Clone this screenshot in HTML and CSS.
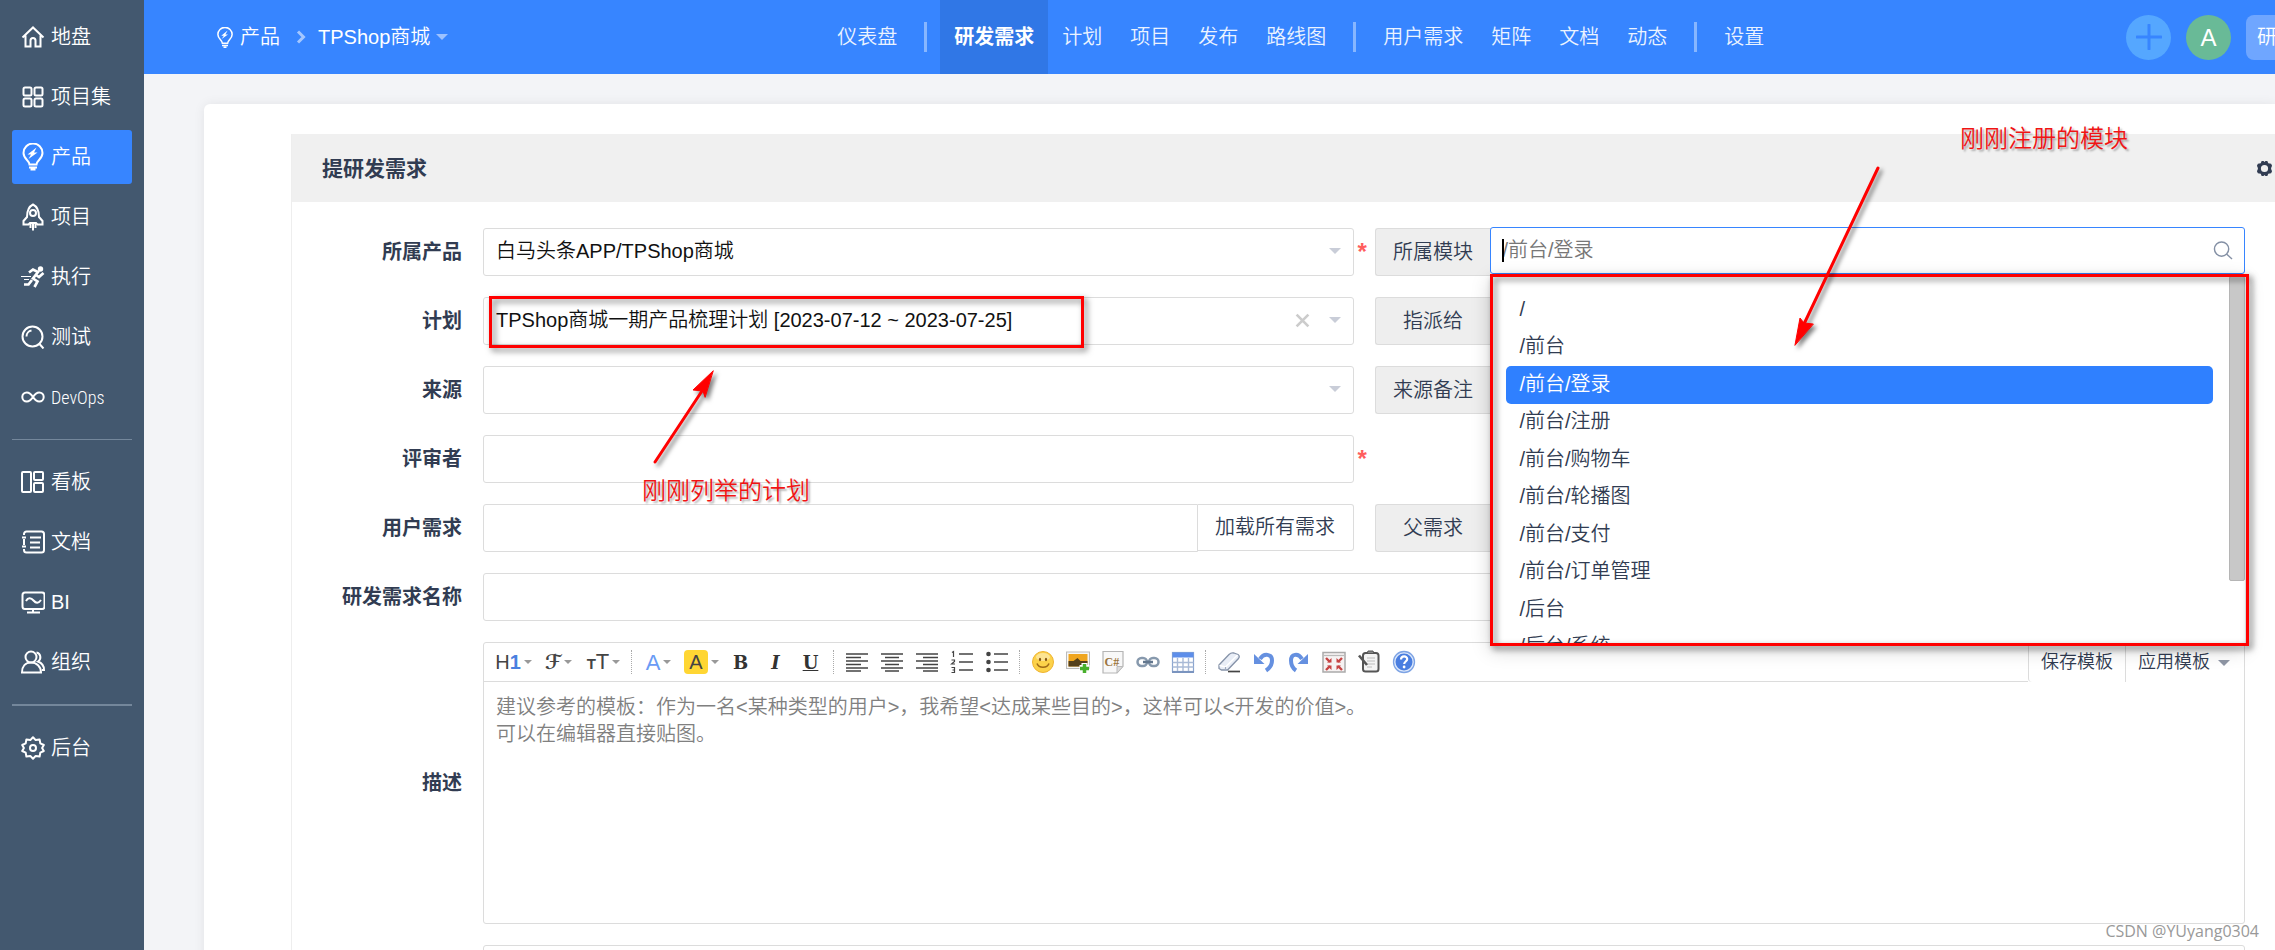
FILE: index.html
```html
<!DOCTYPE html>
<html lang="zh-CN">
<head>
<meta charset="utf-8">
<title>提研发需求</title>
<link rel="stylesheet" href="styles.css">
</head>
<body>
<div class="app">
  <nav class="sidebar" aria-label="主导航">
    <a class="side-item" href="#"><svg class="ico" viewBox="0 0 24 24"><path d="M1.5 12.5 12 2.5l10.500 10M4.500 10.500V21.500h5v-6a2.500 2.500 0 0 1 5 0v6h5V10.500"/></svg>地盘</a>
    <a class="side-item" href="#"><svg class="ico" viewBox="0 0 24 24"><rect x="2.500" y="2.500" width="8" height="8" rx="1.500"/><rect x="13.500" y="2.500" width="8" height="8" rx="1.500"/><rect x="2.500" y="13.500" width="8" height="8" rx="1.500"/><rect x="13.500" y="13.500" width="8" height="8" rx="1.500"/></svg>项目集</a>
    <a class="side-item active" href="#"><svg class="ico bulb" viewBox="0 0 24 28"><path d="M8.500 21.500c0-4-6-5.500-6-11.500a9.500 9.500 0 0 1 19 0c0 6-6 7.500-6 11.500z"/><path d="M8 24.500h8M9.500 26.500h5"/><path class="fill" d="M15.500 4.500 6.500 11.500h3.500L7.500 16l9-6.500h-3.500z"/></svg>产品</a>
    <a class="side-item" href="#"><svg class="ico bulb" viewBox="0 0 24 28"><path d="M6 14C6 7 8 3.500 12 1.500 16 3.500 18 7 18 14l3.500 4v3.500H16.500L15 20H9l-1.500 1.500H2.500V18z"/><circle cx="12" cy="10" r="3"/><path d="M9.500 21v4M12 21v6.500M14.500 21v4"/></svg>项目</a>
    <a class="side-item" href="#"><svg class="ico" viewBox="0 0 24 24"><circle class="fill" cx="19.500" cy="4" r="2.700"/><path d="M8 7.500l4-3 5 2.500-5 6.500 4.500 3-3 5.500M22.500 8l-4.500 4-3-2" stroke-width="2.700"/><path d="M11 15l-3.500 4.500H3" stroke-width="2.700"/><path d="M0 11.500h10M3 14.500h5" stroke-width="1.200"/></svg>执行</a>
    <a class="side-item" href="#"><svg class="ico" viewBox="0 0 24 24"><circle cx="11.500" cy="11.500" r="10"/><path d="M5.500 11.500a6 6 0 0 1 5-6M18.500 19l4 4.500"/></svg>测试</a>
    <a class="side-item" href="#"><svg class="ico" viewBox="0 0 24 24"><path d="M12 12c-2-3-4-4.500-6.200-4.500a4.500 4.500 0 0 0 0 9C8 16.500 10 15 12 12s4-4.500 6.200-4.500a4.500 4.500 0 0 1 0 9C16 16.500 14 15 12 12z"/></svg><span class="narrow">DevOps</span></a>
    <hr class="side-line">
    <a class="side-item" href="#"><svg class="ico" viewBox="0 0 24 24"><rect x="1" y="2" width="9" height="20" rx="1"/><rect x="13" y="2" width="9" height="8" rx="1"/><rect x="13" y="13" width="9" height="9" rx="1"/></svg>看板</a>
    <a class="side-item" href="#"><svg class="ico" viewBox="0 0 24 24"><path d="M3 5V4a2.500 2.500 0 0 1 2.500-2.500h15A2.500 2.500 0 0 1 23 4v16a2.500 2.500 0 0 1-2.500 2.500h-15A2.500 2.500 0 0 1 3 20v-1M3 9v6M1 7.500h4M1 16.500h4M9 7.500h11M9 12.500h10M9 17.500h10"/></svg>文档</a>
    <a class="side-item" href="#"><svg class="ico" viewBox="0 0 24 24"><rect x="1.500" y="2.500" width="22" height="16.500" rx="2.500"/><path d="M5 11c2-3.500 5-3.500 7.500-.5s5 3 7.500-.5M12 19v3M6 22.500h13"/></svg>BI</a>
    <a class="side-item" href="#"><svg class="ico" viewBox="0 0 24 24"><circle cx="10" cy="7" r="5.500"/><path d="M1 22.500c0-6 3.500-10 9-10s10 4 10 10zM15.500 2.500c4 .5 5.500 6.500 1.500 9 4 1.500 6 4 6 8.500h-2"/></svg>组织</a>
    <hr class="side-line thick">
    <a class="side-item" href="#"><svg class="ico" viewBox="0 0 24 24"><path d="M12 1.200l2.700 2.900 3.900-.7.700 3.900 3.500 1.700-1.700 3 1.700 3-3.500 1.700-.7 3.900-3.900-.7L12 22.800l-2.700-2.900-3.900.7-.7-3.900L1.200 15l1.700-3-1.700-3 3.500-1.700.7-3.900 3.900.7z" stroke-linejoin="round"/><circle cx="12" cy="12" r="3"/></svg>后台</a>
  </nav>

  <div class="main">
    <header class="topbar">
      <div class="crumbs">
        <a class="crumb" href="#"><svg class="ico small" viewBox="0 0 24 28"><path d="M8.500 21.500c0-4-6-5.500-6-11.500a9.500 9.500 0 0 1 19 0c0 6-6 7.500-6 11.500z"/><path d="M8 24.500h8M10 27h4"/><path class="fill" d="M15.500 4.500 7 11.500h3.500L7.500 16l8.500-6h-3.500z"/></svg>产品</a>
        <svg class="chev" viewBox="0 0 10 14"><path d="M2 1.500 7.500 7 2 12.500"/></svg>
        <a class="crumb" href="#">TPShop商城<i class="caret pale"></i></a>
      </div>
      <nav class="tabs" aria-label="产品导航">
        <a href="#">仪表盘</a><span class="tab-line"></span>
        <a href="#" class="active">研发需求</a><a href="#">计划</a><a href="#">项目</a><a href="#">发布</a><a href="#">路线图</a><span class="tab-line"></span>
        <a href="#">用户需求</a><a href="#">矩阵</a><a href="#">文档</a><a href="#">动态</a><span class="tab-line"></span>
        <a href="#">设置</a>
      </nav>
      <div class="tools">
        <button class="round add" type="button" aria-label="新增"><svg viewBox="0 0 26 26"><path d="M13 1v24M1 13h24"/></svg></button>
        <button class="round avatar" type="button">A</button>
        <button class="mode" type="button">研</button>
      </div>
    </header>

    <main class="panel">
      <section class="card">
        <div class="card-head">
          <h1>提研发需求</h1>
          <button class="cog" type="button" aria-label="设置"><svg viewBox="0 0 18 18"><path fill-rule="evenodd" d="M6 1h2l1 1.200L10 1h2l1 2.500 3 .5 1 2-1 2.500v1L17 12l-1 2-3 .5-1 2.500h-2l-1-1.200L8 17H6l-1-2.500L2 14l-1-2 1-2.500v-1L1 6l1-2 3-.5zM9 5.200a3.800 3.800 0 1 0 0 7.600 3.800 3.800 0 0 0 0-7.600z"/></svg></button>
        </div>
        <form class="form">
          <label class="lab" for="product">所属产品</label>
          <div class="field"><select id="product" class="control"><option>白马头条APP/TPShop商城</option></select><i class="caret"></i></div>
          <span class="star">*</span>
          <div class="group">
            <label class="addon" for="module">所属模块</label>
            <div class="field picker">
              <input id="module" class="control search" type="text" placeholder="/前台/登录">
              <i class="cursor"></i>
              <svg class="glass" viewBox="0 0 20 20"><circle cx="8.500" cy="8.500" r="7.500"/><path d="M14 14l5.500 5"/></svg>
              <ul class="menu">
                <li>/</li><li>/前台</li><li class="on">/前台/登录</li><li>/前台/注册</li><li>/前台/购物车</li><li>/前台/轮播图</li><li>/前台/支付</li><li>/前台/订单管理</li><li>/后台</li><li>/后台/系统</li>
              </ul>
              <i class="thumb"></i>
              <div class="mark mark-menu"></div>
            </div>
          </div>

          <label class="lab" for="plan">计划</label>
          <div class="field"><select id="plan" class="control"><option>TPShop商城一期产品梳理计划 [2023-07-12 ~ 2023-07-25]</option></select>
            <button class="clear" type="button" aria-label="清除"><svg viewBox="0 0 14 14"><path d="M1.500 1.500l11 11M12.500 1.500l-11 11"/></svg></button><i class="caret"></i>
            <div class="mark mark-plan"></div></div>
          <span></span>
          <div class="group"><label class="addon" for="assign">指派给</label><select id="assign" class="control"></select></div>

          <label class="lab" for="source">来源</label>
          <div class="field"><select id="source" class="control"></select><i class="caret"></i></div>
          <span></span>
          <div class="group"><label class="addon" for="note">来源备注</label><input id="note" class="control" type="text"></div>

          <label class="lab" for="reviewer">评审者</label>
          <input id="reviewer" class="control" type="text">
          <span class="star">*</span>
          <span></span>

          <label class="lab" for="story">用户需求</label>
          <div class="group"><input id="story" class="control joined" type="text"><button class="load" type="button">加载所有需求</button></div>
          <span></span>
          <div class="group"><label class="addon" for="parent">父需求</label><select id="parent" class="control"></select></div>

          <label class="lab" for="title">研发需求名称</label>
          <input id="title" class="control span" type="text">

          <label class="lab" for="desc">描述</label>
          <div class="editor span">
            <div class="bar">
              <button class="tb drop" type="button" aria-label="标题"><span class="h1">H<b>1</b></span><i class="caret mini"></i></button>
              <button class="tb drop" type="button" aria-label="字体"><span class="script">ℱ</span><i class="caret mini"></i></button>
              <button class="tb drop" type="button" aria-label="字号"><span class="size"><small>T</small>T</span><i class="caret mini"></i></button>
              <i class="sep"></i>
              <button class="tb drop2" type="button" aria-label="文字颜色"><span class="blue">A</span><i class="caret mini"></i></button>
              <button class="tb drop2" type="button" aria-label="背景颜色"><span class="yellow">A</span><i class="caret mini"></i></button>
              <button class="tb serif" type="button"><b>B</b></button>
              <button class="tb serif" type="button"><b><em>I</em></b></button>
              <button class="tb serif" type="button"><b><u>U</u></b></button>
              <i class="sep"></i>
              <button class="tb" type="button" aria-label="左对齐"><svg viewBox="0 0 24 24"><path d="M1 4h22M1 7.500h15M1 11h22M1 14.500h15M1 18h22M1 21h15"/></svg></button>
              <button class="tb" type="button" aria-label="居中"><svg viewBox="0 0 24 24"><path d="M1 4h22M5 7.500h14M1 11h22M5 14.500h14M1 18h22M5 21h14"/></svg></button>
              <button class="tb" type="button" aria-label="右对齐"><svg viewBox="0 0 24 24"><path d="M1 4h22M8 7.500h15M1 11h22M8 14.500h15M1 18h22M8 21h15"/></svg></button>
              <button class="tb" type="button" aria-label="编号列表"><svg viewBox="0 0 24 24"><path d="M9 4h14M9 12h14M9 20h14"/><path stroke-width="1.200" d="M2 2.500l1.500-1V7M1.500 10h3v1.500l-3 2.500h3.500M1.500 17.500h3v5h-3M2.500 20h2"/></svg></button>
              <button class="tb" type="button" aria-label="项目列表"><svg viewBox="0 0 24 24"><path d="M9 4h14M9 12h14M9 20h14"/><g fill="#444" stroke="none"><circle cx="3.500" cy="4" r="2.300"/><circle cx="3.500" cy="12" r="2.300"/><circle cx="3.500" cy="20" r="2.300"/></g></svg></button>
              <i class="sep"></i>
              <button class="tb" type="button" aria-label="表情"><svg viewBox="0 0 24 24"><circle cx="12" cy="12" r="10.500" fill="#fcd24a" stroke="#efb431" stroke-width="1"/><ellipse cx="12" cy="7" rx="7" ry="4" fill="#fff" fill-opacity=".4" stroke="none"/><ellipse cx="9" cy="9.500" rx="1.100" ry="1.800" fill="#855612" stroke="none"/><ellipse cx="15" cy="9.500" rx="1.100" ry="1.800" fill="#855612" stroke="none"/><path d="M6 13.500c2 5 10 5 12 0" stroke="#a06b17" stroke-width="1.600"/></svg></button>
              <button class="tb" type="button" aria-label="图片"><svg viewBox="0 0 24 24"><rect x=".5" y="2" width="23" height="16.500" fill="#f7f7f7" stroke="#bbb" stroke-width="1"/><rect x="2.500" y="4" width="19" height="12.500" fill="#efa51f" stroke="none"/><path d="M2.500 11h5l4-3 3 3h7v5.500h-19z" fill="#54401c" stroke="none"/><path d="M18.500 13v10M13.500 18h10" stroke="#fff" stroke-width="6"/><path d="M18.500 14v9M14 18.500h9" stroke="#48b02c" stroke-width="3.500"/></svg></button>
              <button class="tb" type="button" aria-label="代码"><svg viewBox="0 0 24 24"><path d="M2 1.500h20v14.500l-6 7H2z" fill="#f8f8f8" stroke="#b5b5b5" stroke-width="1.200"/><path d="M22 16.500h-6v6.500z" fill="#ddd" stroke="#bbb" stroke-width="1"/><text x="3.500" y="16" class="cs">C#</text></svg></button>
              <button class="tb" type="button" aria-label="链接"><svg viewBox="0 0 24 24"><rect x="1.500" y="8" width="9.500" height="8" rx="4" stroke="#8799ad" stroke-width="2.500"/><rect x="13" y="8" width="9.500" height="8" rx="4" stroke="#8799ad" stroke-width="2.500"/><path d="M7 12h10" stroke="#63778e" stroke-width="2.500"/></svg></button>
              <button class="tb" type="button" aria-label="表格"><svg viewBox="0 0 24 24"><rect x="1.500" y="2.500" width="21" height="19" fill="#fff" stroke="#8aa5cf" stroke-width="1.200"/><path d="M1.500 2.500h21v5h-21z" fill="#5d8eea" stroke="none"/><path d="M6.500 8v14M12 8v14M17.500 8v14M1.500 12.500h21M1.500 17h21" stroke="#a9bad6" stroke-width="1.400"/><path d="M1 22h22" stroke="#7a94bf" stroke-width="2"/></svg></button>
              <i class="sep"></i>
              <button class="tb" type="button" aria-label="清除格式"><svg viewBox="0 0 24 24"><path d="M2 15 12 4.500c2-2 3-2 5-1.500l4 1.500c1.500 1 1.500 2.500.5 4L10.500 20H4.500L2 18.500z" fill="#e9eef7" stroke="#8592a8" stroke-width="1.300"/><path d="M2.500 15.500l6 1.500L20.500 5" stroke="#fff" stroke-width="1.500"/><path d="M8.500 17v3" stroke="#9fabc0" stroke-width="1.200"/><path d="M11 21.500h12" stroke="#444" stroke-width="1.700"/></svg></button>
              <button class="tb" type="button" aria-label="撤销"><svg viewBox="0 0 24 24"><path d="M8 9c4-6.500 12-5 12 1.500 0 5-3 8-6 10" stroke="#6590e0" stroke-width="4"/><path d="M2 4v10h10.500z" fill="#6590e0" stroke="none"/></svg></button>
              <button class="tb" type="button" aria-label="重做"><svg viewBox="0 0 24 24"><path d="M15 9C11 2.500 4 4 4 10.500c0 5 2 8 5 10" stroke="#6590e0" stroke-width="4"/><path d="M21 4v10H10.500z" fill="#6590e0" stroke="none"/></svg></button>
              <button class="tb" type="button" aria-label="全屏"><svg viewBox="0 0 24 24"><rect x="1" y="2.500" width="22" height="19.500" fill="#f6f2f2" stroke="#aaa" stroke-width="1.500"/><path d="M2 5.500h20" stroke="#bbb" stroke-width="1.200"/><path d="M4 8l4 4M20 8l-4 4M4 20l4-4M20 20l-4-4" stroke="#c64343" stroke-width="2.400"/><path d="M9.500 8v4.500H5zM14.500 8v4.500H19zM9.500 20v-4.500H5zM14.500 20v-4.500H19z" fill="#c64343" stroke="none"/></svg></button>
              <button class="tb" type="button" aria-label="粘贴"><svg viewBox="0 0 24 24"><rect x="6" y="3" width="15.500" height="18.500" rx="2.500" fill="#f4f4f4" stroke="#555" stroke-width="2"/><path d="M10 3.500l1-2.500h5l1 2.500z" fill="#888" stroke="#555" stroke-width="1"/><path d="M10 8h8M10 11h8M10 14h8M10 17h5" stroke="#bbb" stroke-width="1.200"/><path d="M2 5.500 10 15" stroke="#555" stroke-width="2.600"/></svg></button>
              <button class="tb" type="button" aria-label="帮助"><svg viewBox="0 0 24 24"><circle cx="12" cy="12" r="10.500" fill="#dce8fb" stroke="#7da3e4" stroke-width="1.300"/><circle cx="12" cy="12" r="8.500" fill="#4a7ee0" stroke="none"/><path d="M9 9.500c0-4 6.200-4 6.200-.5 0 2.500-3 2.500-3 5" stroke="#fff" stroke-width="2.200"/><circle cx="12.100" cy="17" r="1.400" fill="#fff" stroke="none"/></svg></button>
              <div class="templates"><button type="button">保存模板</button><button type="button">应用模板<i class="caret dark"></i></button></div>
            </div>
            <textarea id="desc" placeholder="建议参考的模板：作为一名&lt;某种类型的用户&gt;，我希望&lt;达成某些目的&gt;，这样可以&lt;开发的价值&gt;。
可以在编辑器直接贴图。"></textarea>
          </div>

          <span></span>
          <input class="control span" type="text" aria-label="验收标准">
        </form>
      </section>
    </main>
  </div>

  <div class="note note-module">刚刚注册的模块</div>
  <svg class="arrow arrow-module" viewBox="0 0 100 190"><path d="M88 8 14 164"/><path class="head" d="M5 185l5-27 4 5 9 1z"/></svg>
  <div class="note note-plan">刚刚列举的计划</div>
  <svg class="arrow arrow-plan" viewBox="0 0 80 110"><path d="M15 97 62 26"/><path class="head" d="M73 6 53 25l10 1 2 6z"/></svg>
  <div class="watermark">CSDN @YUyang0304</div>
</div>
</body>
</html>
```
FILE: styles.css
```css
* { box-sizing: border-box; }
body {
  margin: 0;
  font: 350 20px/27px "Liberation Sans", "Noto Sans CJK SC", sans-serif;
  color: #313c52;
}
a { color: inherit; text-decoration: none; }
button, input, select, textarea { font: inherit; color: inherit; }
button { border: 0; padding: 0; background: none; cursor: pointer; }
i { display: block; font-style: normal; }
.app { position: relative; display: flex; height: 100vh; overflow: hidden; background: #f3f4f7; }

/* sidebar */
.sidebar { flex: none; width: 144px; padding: 10px 12px; background: #43586f; color: #fff; }
.side-item {
  display: flex; align-items: center; gap: 6px;
  height: 54px; margin-bottom: 6px; padding-left: 9px; border-radius: 3px;
}
.side-item.active { background: #3785ff; }
.side-line { height: 1px; margin: 15px 0; border: 0; background: #74879b; }
.side-line.thick { height: 2px; }
.narrow { font-family: "Roboto Condensed", "Liberation Sans Narrow", "Liberation Sans", sans-serif; font-size: 18px; }
.ico { flex: none; width: 24px; height: 24px; fill: none; stroke: #fff; stroke-width: 2; }
.ico .fill { fill: #fff; stroke: none; }
.ico.bulb { height: 28px; }
.ico.small { width: 18px; height: 21px; }

/* header */
.main { flex: 1; min-width: 0; display: flex; flex-direction: column; }
.topbar { display: flex; height: 74px; flex: none; overflow: hidden; background: #3785ff; color: #fff; }
.crumbs { flex: 11 1 0; display: flex; align-items: center; padding-left: 72px; gap: 12px; }
.crumb { display: flex; align-items: center; gap: 6px; }
.chev { width: 10px; height: 14px; margin-left: 4px; fill: none; stroke: #a4c7ff; stroke-width: 3; }
.caret { flex: none; border: 6px solid transparent; border-top-color: #c9cdd8; border-bottom: 0; }
.caret.pale { border-top-color: #9dc2ff; }
.caret.dark { border-top-color: #8f96a5; }
.caret.mini { border-width: 4px; border-bottom: 0; border-top-color: #999; }
.tabs { display: flex; align-items: center; color: #ebf3ff; }
.tabs a { padding: 0 14px; line-height: 74px; white-space: nowrap; }
.tabs a.active { background: #3077e6; color: #fff; font-weight: 700; }
.tab-line { width: 3px; height: 30px; margin: 0 13px; background: #87b6ff; }
.tools { flex: 9 1 0; display: flex; align-items: center; justify-content: flex-end; gap: 15px; }
.round { flex: none; width: 45px; height: 45px; border-radius: 50%; }
.add { background: #55a7ff; }
.add svg { display: block; width: 26px; height: 26px; margin: auto; fill: none; stroke: #3785ff; stroke-width: 3; stroke-linecap: round; }
.avatar { background: #69ba97; color: #fff; font-size: 24px; font-weight: 400; }
.mode { flex: none; height: 45px; padding: 0 11px; margin-right: -13px; border-radius: 8px 0 0 8px; background: #6fa6ff; color: #fff; }

/* card */
.panel { flex: 1; margin: 30px 0 0 60px; padding: 30px 0 0 87px; background: #fff; border-radius: 6px 0 0 0; box-shadow: 0 0 12px rgba(0, 0, 0, .07); }
.card { height: 100%; border-left: 1px solid #eee; }
.card-head { display: flex; align-items: center; justify-content: space-between; height: 68px; padding: 0 2px 0 30px; background: #f0f0f0; }
.card-head h1 { margin: 0; font-size: 21px; font-weight: 700; }
.cog svg { display: block; width: 17px; height: 17px; fill: #313c52; }

/* form */
.form {
  display: grid; align-items: center; row-gap: 21px;
  grid-template-columns: 191px minmax(0, 1fr) 21px minmax(0, 1fr);
  padding: 26px 30px 0 0;
}
.lab { padding-right: 21px; text-align: right; font-weight: 700; }
.span { grid-column: 2 / -1; }
.control {
  display: block; width: 100%; height: 48px; padding: 0 12px 2px; margin: 0;
  border: 1px solid #dcdcdc; border-radius: 3px; background: #fff; color: #111; outline: 0; appearance: none;
}
.field { position: relative; width: 100%; }
.field > .caret { position: absolute; right: 13px; top: 20px; }
.clear { position: absolute; right: 44px; top: 16px; }
.clear svg { display: block; width: 15px; height: 15px; fill: none; stroke: #ccc; stroke-width: 2.500; }
.star { padding-left: 4px; color: #ff5d5d; font-size: 24px; font-weight: 700; line-height: 24px; }
.group { display: flex; }
.addon { flex: none; width: 116px; height: 48px; line-height: 46px; text-align: center; background: #eee; border: 1px solid #dcdcdc; border-right: 0; border-radius: 3px 0 0 3px; }
.joined { border-radius: 3px 0 0 3px; }
.load { flex: none; width: 156px; height: 47px; border: 1px solid #dcdcdc; border-left: 0; border-radius: 0 3px 3px 0; background: #fff; }

/* module picker */
.picker { margin: -1px 0 0 -1px; }
.search { border-color: #3785ff; height: 47px; padding-bottom: 0; }
.search::placeholder { color: #777; opacity: 1; }
.cursor { position: absolute; left: 12px; top: 12px; width: 2px; height: 23px; background: #000; }
.glass { position: absolute; right: 12px; top: 14px; width: 20px; height: 19px; fill: none; stroke: #8490a5; stroke-width: 1.500; }
.menu {
  position: absolute; z-index: 2; top: 47px; left: 0; right: 0; height: 370px; overflow: hidden;
  margin: 0; padding: 17px 32px 0 16px; list-style: none; background: #fff; box-shadow: 0 6px 18px rgba(0, 0, 0, .18);
}
.menu li { height: 38px; padding-left: 14px; line-height: 37px; border-radius: 5px; margin-bottom: -1px; }
.menu li:nth-child(even) { margin-bottom: 0; }
.menu .on { background: #2f80ff; color: #fff; }
.thumb { position: absolute; z-index: 2; right: 0; top: 49px; width: 16px; height: 305px; background: #c8c8c8; border: 1px solid #b5b5b5; border-radius: 2px; }

/* editor */
.editor { height: 282px; display: flex; flex-direction: column; border: 1px solid #dcdcdc; border-radius: 3px; }
.bar { display: flex; align-items: center; height: 39px; flex: none; padding-left: 7px; border-bottom: 1px solid #dcdcdc; color: #444; }
.tb { flex: none; display: flex; align-items: center; justify-content: center; gap: 3px; width: 35px; height: 38px; font-weight: 400; }
.tb svg { display: block; width: 24px; height: 24px; fill: none; stroke: #444; stroke-width: 1.600; }
.drop { width: 45px; }
.drop2 { width: 43px; }
.h1 b { color: #4a80e0; }
.script { font-family: "DejaVu Sans", "DejaVu Serif", serif; font-size: 20px; font-weight: 700; }
.size { font-size: 22px; }
.size small { font-size: 15px; font-weight: 700; }
.blue { color: #6a9bf5; font-size: 22px; }
.yellow { width: 24px; height: 24px; line-height: 24px; border-radius: 4px; background: #ffd633; }
.serif { font-family: "DejaVu Serif", serif; font-size: 18px; color: #333; }
.cs { font: 700 12px "Liberation Serif", serif; fill: #9a7440; stroke: none; }
.sep { flex: none; width: 1px; height: 24px; margin: 0 5px; border-left: 1px dotted #aaa; }
.templates { display: flex; align-self: flex-start; margin: 0 0 0 auto; background: #fff; }
.templates button { display: flex; align-items: center; gap: 8px; height: 39px; padding: 0 12px; font-size: 18px; color: #313c52; background: #fff; border-left: 1px solid #dcdcdc; border-radius: 0 0 0 4px; }
.templates button + button { border-radius: 0; padding-right: 14px; }
.editor textarea { flex: 1; width: 100%; margin: 0; padding: 12px; border: 0; outline: 0; resize: none; background: transparent; }
.editor textarea::placeholder { color: #808080; opacity: 1; }

/* annotations */
.mark { position: absolute; z-index: 3; border: 3px solid #f00; filter: drop-shadow(3px 3px 3px rgba(0, 0, 0, .55)); pointer-events: none; }
.mark-menu { top: 47px; left: 0; right: -4px; height: 372px; }
.mark-plan { top: -1px; left: 6px; width: 595px; height: 52px; }
.note { position: absolute; z-index: 4; color: #f01414; font-size: 24px; line-height: 30px; white-space: nowrap; text-shadow: 2px 2px 2px rgba(0, 0, 0, .3); }
.note-module { left: 1960px; top: 124px; }
.note-plan { left: 642px; top: 476px; }
.arrow { position: absolute; z-index: 4; fill: none; stroke: #f00; stroke-width: 3; stroke-linecap: round; filter: drop-shadow(3px 3px 2px rgba(0, 0, 0, .5)); pointer-events: none; }
.arrow .head { fill: #f00; stroke-width: 1; }
.arrow-module { left: 1790px; top: 160px; width: 100px; height: 190px; }
.arrow-plan { left: 640px; top: 365px; width: 80px; height: 110px; }
.watermark { position: absolute; z-index: 4; right: 16px; bottom: 6px; color: #999; font: 400 16px/26px "Open Sans", "Noto Sans", sans-serif; }
```
